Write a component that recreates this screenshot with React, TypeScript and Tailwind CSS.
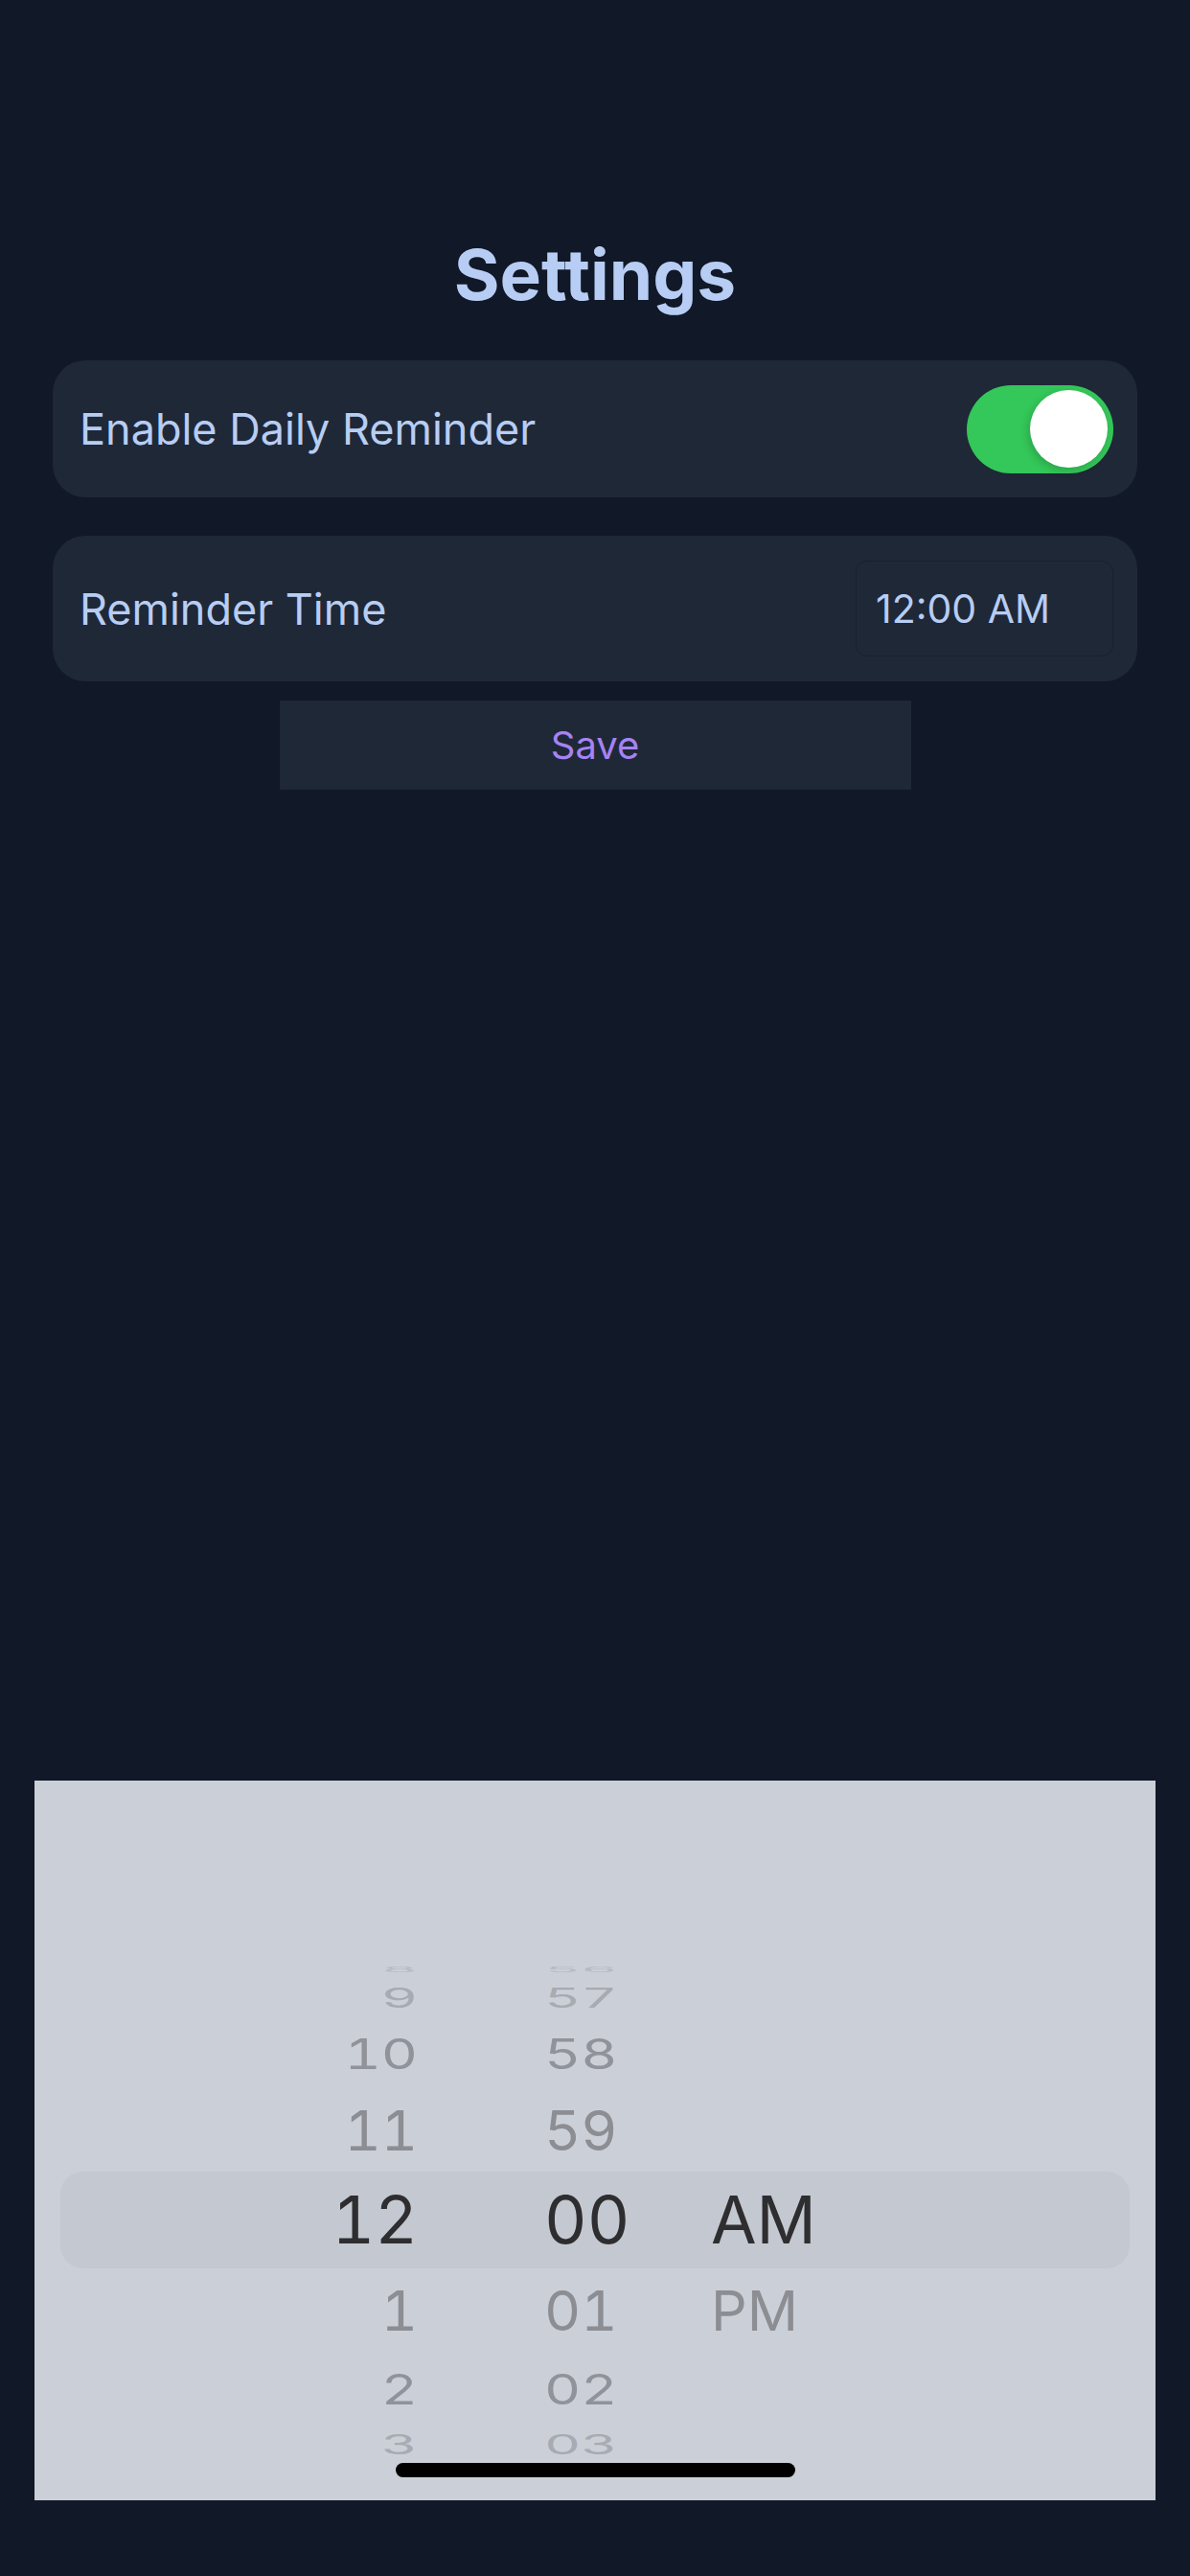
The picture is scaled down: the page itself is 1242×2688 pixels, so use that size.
import React from "react";

type Row = {
  h: string;
  m: string;
  ap: string;
  box: string;
  text: string;
  apText: string;
};

const rows: Row[] = [
  { h: "8", m: "56", ap: "", box: "h-[30px]", text: "text-[59px] scale-y-[0.12] text-[#b7bbc2]", apText: "" },
  { h: "9", m: "57", ap: "", box: "h-[28px]", text: "text-[59px] scale-y-[0.48] text-[#a7abb2]", apText: "" },
  { h: "10", m: "58", ap: "", box: "h-[88px]", text: "text-[59px] scale-y-[0.75] text-[#909399]", apText: "" },
  { h: "11", m: "59", ap: "", box: "h-[74px]", text: "text-[59px] scale-y-[0.97] text-[#8c8e93]", apText: "" },
];

const rowsBelow: Row[] = [
  { h: "1", m: "01", ap: "PM", box: "h-[78px]", text: "text-[59px] scale-y-[0.97] text-[#8c8e93]", apText: "text-[59px] scale-y-[0.97] text-[#8c8e93]" },
  { h: "2", m: "02", ap: "", box: "h-[84px]", text: "text-[59px] scale-y-[0.75] text-[#909399]", apText: "" },
  { h: "3", m: "03", ap: "", box: "h-[32px]", text: "text-[59px] scale-y-[0.48] text-[#a7abb2]", apText: "" },
];

function WheelRow({ r }: { r: Row }) {
  return (
    <div className={`flex items-center ${r.box}`}>
      <div className={`w-[373px] text-right leading-none tabular-nums ${r.text}`}>{r.h}</div>
      <div className={`ml-[132px] w-[174px] leading-none tabular-nums ${r.text}`}>{r.m}</div>
      <div className={`leading-none ${r.apText}`}>{r.ap}</div>
    </div>
  );
}

export default function App() {
  return (
    <div className="min-h-[2688px] w-full bg-[#111827] font-['Inter','Noto_Sans',sans-serif] flex flex-col">
      <div className="pt-[250px] text-center text-[73px] leading-none font-bold text-[#b7cdf4]">
        Settings
      </div>

      <div className="mt-[53px] px-[55px] flex flex-col">
        <div className="h-[143px] rounded-[34px] bg-[#1f2837] flex items-center justify-between pl-[28px] pr-[25px]">
          <span className="text-[45px] leading-none text-[#b7cdf4]">Enable Daily Reminder</span>
          <div className="w-[153px] h-[92px] rounded-full bg-[#34c759] flex items-center justify-end pr-[6px]">
            <div className="w-[81px] h-[81px] rounded-full bg-white shadow-[-2px_3px_8px_rgba(0,0,0,0.18)]" />
          </div>
        </div>

        <div className="mt-[40px] h-[152px] rounded-[34px] bg-[#1f2837] flex items-center justify-between pl-[28px] pr-[25px]">
          <span className="text-[45px] leading-none text-[#b7cdf4]">Reminder Time</span>
          <div className="w-[269px] h-[100px] rounded-[12px] border border-[#19202c] bg-[#1f2837] flex items-center pl-[20px]">
            <span className="text-[41px] leading-none text-[#b7cdf4]">12:00 AM</span>
          </div>
        </div>

        <div className="mt-[20px] self-center w-[659px] h-[93px] bg-[#1f2837] flex items-center justify-center">
          <span className="text-[40px] leading-none text-[#a683f3]">Save</span>
        </div>
      </div>

      <div className="mt-[1034px] mx-[36px] h-[751px] bg-[#cbd0d8] flex flex-col pt-[182px] px-[27px]">
        {rows.map((r) => (
          <WheelRow key={r.h} r={r} />
        ))}
        <div className="mt-[6px] mb-[5px] h-[101px] rounded-[24px] bg-[#c4c8d0] flex items-center">
          <div className="w-[373px] text-right leading-none tabular-nums text-[69px] text-[#2e2e30]">12</div>
          <div className="ml-[132px] w-[174px] leading-none tabular-nums text-[69px] text-[#2e2e30]">00</div>
          <div className="leading-none text-[69px] text-[#2e2e30]">AM</div>
        </div>
        {rowsBelow.map((r) => (
          <WheelRow key={r.h} r={r} />
        ))}
        <div className="mt-[4px] self-center w-[417px] h-[15px] rounded-full bg-black" />
      </div>
    </div>
  );
}
